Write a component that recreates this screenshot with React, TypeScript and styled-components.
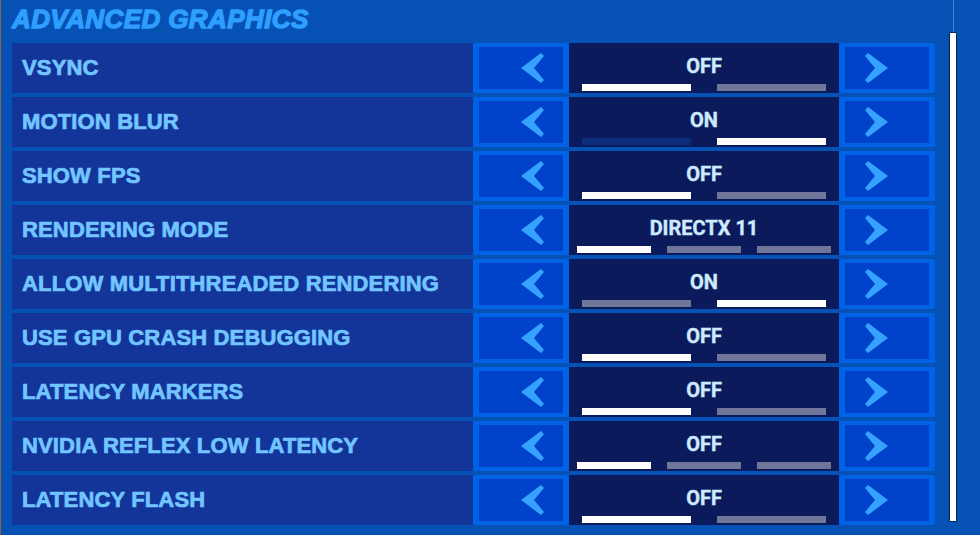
import React from "react";
import styled, { createGlobalStyle } from "styled-components";

const Global = createGlobalStyle`
  html, body { margin: 0; padding: 0; }
  body {
    width: 980px;
    height: 535px;
    overflow: hidden;
    background: #0651b4;
    border-left: 1px solid #8a6440;
    box-sizing: border-box;
  }
  #root { height: 100%; }
`;

const Page = styled.div`
  display: flex;
  height: 535px;
  padding-left: 11px;
  box-sizing: border-box;
`;

const Main = styled.div`
  display: flex;
  flex-direction: column;
  width: 923px;
`;

const Title = styled.h1`
  margin: 0;
  height: 43px;
  padding-top: 4px;
  box-sizing: border-box;
  font-family: "Liberation Sans", Arial, sans-serif;
  font-weight: 700;
  font-style: italic;
  font-size: 26px;
  line-height: 30px;
  letter-spacing: 0.4px;
  color: #2f9fff;
  -webkit-text-stroke: 1.3px #2f9fff;
  white-space: nowrap;
`;

const List = styled.div`
  display: flex;
  flex-direction: column;
  gap: 4px;
`;

const Row = styled.div`
  display: grid;
  grid-template-columns: 461px 96px 270px 96px;
  height: 50px;
`;

const Label = styled.div`
  display: flex;
  align-items: center;
  padding-left: 10px;
  background: #13359a;
  font-family: "Liberation Sans", Arial, sans-serif;
  font-weight: 700;
  font-size: 22px;
  letter-spacing: 0.15px;
  color: #72c5ff;
  -webkit-text-stroke: 0.7px #72c5ff;
  white-space: nowrap;
`;

const ArrowButton = styled.div<{ $dir: "left" | "right" }>`
  display: flex;
  align-items: center;
  justify-content: ${(p) => (p.$dir === "left" ? "flex-start" : "flex-end")};
  padding-left: ${(p) => (p.$dir === "left" ? "42px" : "0")};
  padding-right: ${(p) => (p.$dir === "right" ? "41px" : "0")};
  background: #0042c9;
  border-style: solid;
  border-color: #0062e7;
  border-width: 4px 6px;
  box-sizing: border-box;
`;

const Value = styled.div`
  display: flex;
  flex-direction: column;
  align-items: center;
  padding-top: 11px;
  box-sizing: border-box;
  background: #0b1a5b;
`;

const ValueText = styled.div`
  font-family: Roboto, "Liberation Sans", sans-serif;
  font-weight: 700;
  font-size: 20px;
  line-height: 24px;
  color: #cdeaff;
  -webkit-text-stroke: 0.4px #cdeaff;
  white-space: nowrap;
`;

const Bars = styled.div<{ $count: number }>`
  display: flex;
  gap: ${(p) => (p.$count === 3 ? "16px" : "26px")};
  margin-top: 6px;
`;

const Bar = styled.div<{ $state: "on" | "off" | "dim"; $count: number }>`
  width: ${(p) => (p.$count === 3 ? "74px" : "109px")};
  height: 7px;
  background: ${(p) =>
    p.$state === "on" ? "#ffffff" : p.$state === "dim" ? "#0b2e7c" : "#6f7699"};
`;

const ScrollColumn = styled.div`
  display: flex;
  flex-direction: column;
  align-items: center;
  width: 8px;
  margin-left: 14px;
`;

const Track = styled.div`
  width: 1px;
  height: 32px;
  background: #3b83d6;
`;

const Thumb = styled.div`
  width: 8px;
  height: 490px;
  background: #ffffff;
  border: 1px solid #0b2457;
  border-radius: 1px;
  box-sizing: border-box;
`;

const Arrow = ({ dir }: { dir: "left" | "right" }) => (
  <svg width="23" height="30" viewBox="0 0 23 30">
    <polygon
      fill="#36a2ff"
      points={
        dir === "left"
          ? "0,15 20,0 23,3 13,15 23,27 20,30"
          : "23,15 3,0 0,3 10,15 0,27 3,30"
      }
    />
  </svg>
);

type Setting = {
  label: string;
  value: string;
  bars: Array<"on" | "off" | "dim">;
};

const settings: Setting[] = [
  { label: "VSYNC", value: "OFF", bars: ["on", "off"] },
  { label: "MOTION BLUR", value: "ON", bars: ["dim", "on"] },
  { label: "SHOW FPS", value: "OFF", bars: ["on", "off"] },
  { label: "RENDERING MODE", value: "DIRECTX 11", bars: ["on", "off", "off"] },
  { label: "ALLOW MULTITHREADED RENDERING", value: "ON", bars: ["off", "on"] },
  { label: "USE GPU CRASH DEBUGGING", value: "OFF", bars: ["on", "off"] },
  { label: "LATENCY MARKERS", value: "OFF", bars: ["on", "off"] },
  { label: "NVIDIA REFLEX LOW LATENCY", value: "OFF", bars: ["on", "off", "off"] },
  { label: "LATENCY FLASH", value: "OFF", bars: ["on", "off"] },
];

export default function App() {
  return (
    <>
      <Global />
      <Page>
        <Main>
          <Title>ADVANCED GRAPHICS</Title>
          <List>
            {settings.map((s) => (
              <Row key={s.label}>
                <Label>{s.label}</Label>
                <ArrowButton $dir="left">
                  <Arrow dir="left" />
                </ArrowButton>
                <Value>
                  <ValueText>{s.value}</ValueText>
                  <Bars $count={s.bars.length}>
                    {s.bars.map((b, i) => (
                      <Bar key={i} $state={b} $count={s.bars.length} />
                    ))}
                  </Bars>
                </Value>
                <ArrowButton $dir="right">
                  <Arrow dir="right" />
                </ArrowButton>
              </Row>
            ))}
          </List>
        </Main>
        <ScrollColumn>
          <Track />
          <Thumb />
        </ScrollColumn>
      </Page>
    </>
  );
}
